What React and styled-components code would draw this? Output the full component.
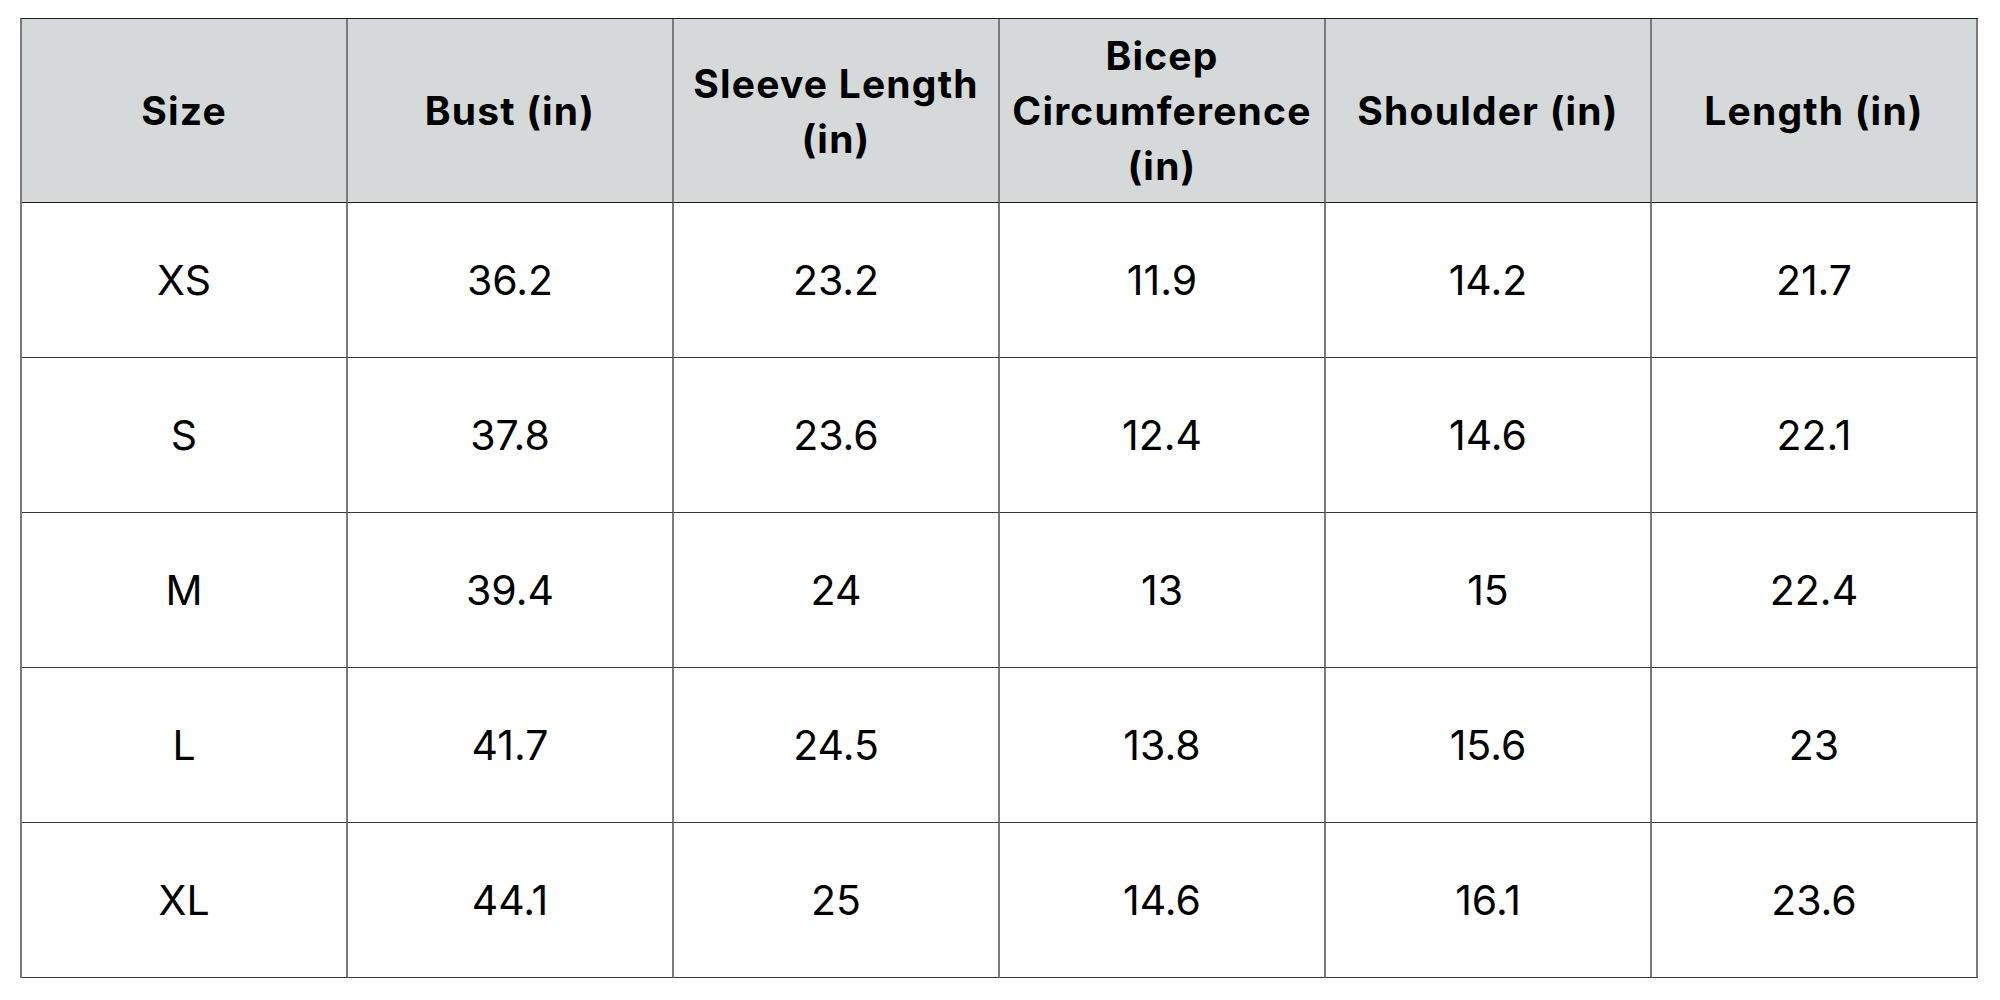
import React from "react";
import styled, { createGlobalStyle } from "styled-components";

const columns = [
	"Size",
	"Bust (in)",
	"Sleeve Length (in)",
	"Bicep Circumference (in)",
	"Shoulder (in)",
	"Length (in)",
];

const rows = [
	["XS", "36.2", "23.2", "11.9", "14.2", "21.7"],
	["S", "37.8", "23.6", "12.4", "14.6", "22.1"],
	["M", "39.4", "24", "13", "15", "22.4"],
	["L", "41.7", "24.5", "13.8", "15.6", "23"],
	["XL", "44.1", "25", "14.6", "16.1", "23.6"],
];

const App = () => {
	return (
		<>
			<GlobalStyle />
			<Chart>
				{columns.map((label) => (
					<HeadCell key={label}>
						<HeadText>{label}</HeadText>
					</HeadCell>
				))}
				{rows.map((row) =>
					row.map((value, i) => <Cell key={row[0] + i}>{value}</Cell>)
				)}
			</Chart>
		</>
	);
};

const GlobalStyle = createGlobalStyle`
	body {
		margin: 0;
		background: #ffffff;
		font-family: "Inter", "Liberation Sans", sans-serif;
		color: #000000;
	}
`;

const Chart = styled.div`
	display: grid;
	grid-template-columns: repeat(6, 326px);
	grid-template-rows: 184px repeat(5, 155px);
	width: 1958px;
	box-sizing: border-box;
	margin: 18px 0 0 20px;
	border-left: 2px solid #7a7a7a;
	border-top: 1px solid #1e1e1e;
`;

const HeadCell = styled.div`
	display: flex;
	align-items: center;
	justify-content: center;
	box-sizing: border-box;
	padding: 0 10px;
	background: #d5d9da;
	border-right: 2px solid #7a7a7a;
	border-bottom: 1px solid #1e1e1e;
`;

const HeadText = styled.span`
	font-family: "Inter", "Liberation Sans", sans-serif;
	font-weight: 700;
	font-size: 39px;
	letter-spacing: 1.2px;
	line-height: 55px;
	text-align: center;
`;

const Cell = styled.div`
	display: flex;
	align-items: center;
	justify-content: center;
	box-sizing: border-box;
	font-family: "Inter", "Liberation Sans", sans-serif;
	font-size: 41px;
	font-weight: 400;
	border-right: 2px solid #7a7a7a;
	border-bottom: 1px solid #3a3a3a;
`;

export default App;
